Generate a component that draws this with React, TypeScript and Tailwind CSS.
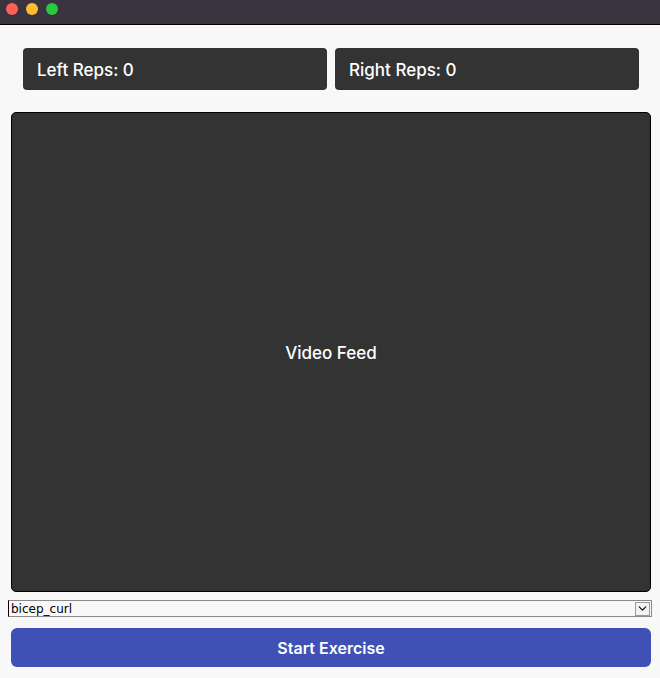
import { ChevronDown } from 'lucide-react';

export default function App() {
  return (
    <div className="flex h-[678px] w-[660px] flex-col overflow-hidden bg-[#f8f8f8] font-['Inter','Liberation_Sans',sans-serif]">
      <div className="flex h-[25px] shrink-0 items-start gap-[8px] border-b border-black bg-[#3a3441] pl-[6px] pt-[3px]">
        <span className="h-[12px] w-[12px] rounded-full bg-[#fe5f57]" />
        <span className="h-[12px] w-[12px] rounded-full bg-[#febc2e]" />
        <span className="h-[12px] w-[12px] rounded-full bg-[#28c840]" />
      </div>

      <div className="mt-[23px] flex gap-[8px] pl-[23px]">
        <div className="flex h-[42px] w-[304px] items-center rounded-[4px] bg-[#333333] px-[14px] pt-[3px] text-[17px] font-medium text-white">
          Left Reps: 0
        </div>
        <div className="flex h-[42px] w-[304px] items-center rounded-[4px] bg-[#333333] px-[14px] pt-[3px] text-[17px] font-medium text-white">
          Right Reps: 0
        </div>
      </div>

      <div className="ml-[11px] mt-[22px] flex h-[480px] w-[640px] items-center justify-center rounded-[5px] border border-black bg-[#333333] pt-[3px] text-[17px] font-medium text-white">
        Video Feed
      </div>

      <div className="ml-[8px] mt-[8px] flex h-[17px] w-[644px] items-center border border-[#8a8a8a] border-l-black bg-[#f8f8f8] pl-[2px] pr-[1px] font-['DejaVu_Sans','Liberation_Sans',sans-serif] text-[12px] text-black">
        <span className="flex-1 leading-none">bicep_curl</span>
        <span className="flex h-[14px] w-[15px] items-center justify-center border border-[#9a9a9a] bg-[#f3f3f3]">
          <ChevronDown className="h-[13px] w-[13px]" strokeWidth={2} />
        </span>
      </div>

      <button className="ml-[11px] mt-[11px] h-[39px] w-[640px] rounded-[6px] bg-[#3f51b5] text-[16px] font-semibold text-white">
        Start Exercise
      </button>
    </div>
  );
}
